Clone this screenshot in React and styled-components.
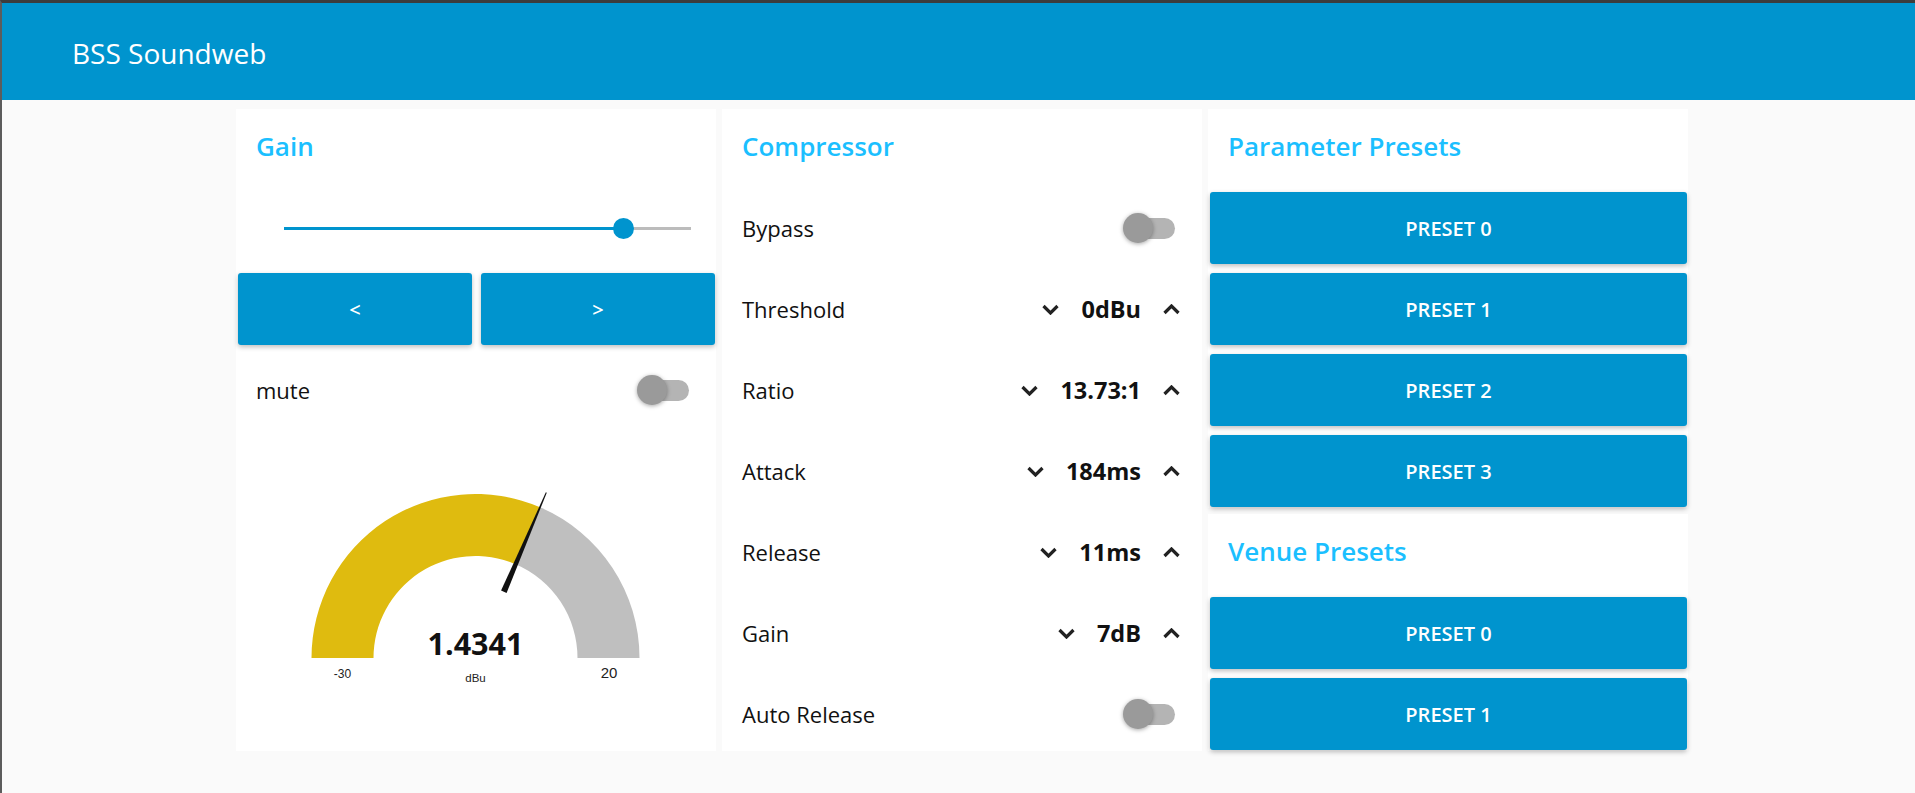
import React from 'react';
import styled, { createGlobalStyle } from 'styled-components';

const GlobalStyle = createGlobalStyle`
  html, body { margin: 0; padding: 0; background: #fafafa; }
  body { font-family: "Open Sans", "Noto Sans", sans-serif; }
  * { box-sizing: border-box; }
`;

const BLUE = '#0094ce';

const Page = styled.div`
  min-height: 100vh;
  border-top: 3px solid #3c3c3c;
  border-left: 2px solid #5c5c5c;
  background: #fafafa;
`;

const Header = styled.header`
  height: 97px;
  background: ${BLUE};
  display: flex;
  align-items: center;
  padding: 3px 0 0 70px;
`;

const AppTitle = styled.h1`
  margin: 0;
  font-size: 28px;
  font-weight: 400;
  color: #fff;
`;

const Main = styled.main`
  display: flex;
  align-items: flex-start;
  gap: 6px;
  padding: 9px 0 0 234px;
`;

const Column = styled.div`
  display: flex;
  flex-direction: column;
  gap: 6px;
  width: 480px;
`;

const Card = styled.section`
  background: #fff;
  width: 480px;
  display: flex;
  flex-direction: column;
  gap: 9px;
  padding: 0 1px 1px 2px;
`;

const CardTitle = styled.h2`
  margin: 0;
  height: 74px;
  line-height: 74px;
  padding-left: 18px;
  font-size: 26px;
  font-weight: 600;
  color: #1bbfff;
`;

const Row = styled.div`
  height: 72px;
  display: flex;
  align-items: center;
  justify-content: space-between;
  padding: 0 ${(p) => (p.$stepper ? '21px' : '26px')} 0 18px;
`;

const Label = styled.span`
  font-size: 22px;
  color: #111;
`;

const Stepper = styled.div`
  display: flex;
  align-items: center;
  gap: 22px;
`;

const Value = styled.span`
  font-size: 23.5px;
  font-weight: 700;
  color: #111;
`;

const ChevronSvg = styled.svg`
  display: block;
  width: 17px;
  height: 11px;
`;

const Chevron = ({ up }) => (
  <ChevronSvg viewBox="0 0 17 11">
    <polyline
      points={up ? '1.5,9 8.5,2 15.5,9' : '1.5,2 8.5,9 15.5,2'}
      fill="none"
      stroke="#222"
      strokeWidth="3.2"
    />
  </ChevronSvg>
);

const ToggleBox = styled.div`
  position: relative;
  width: 52px;
  height: 30px;
  display: flex;
  align-items: center;
  justify-content: flex-end;
`;

const ToggleTrack = styled.div`
  width: 51px;
  height: 21px;
  border-radius: 10.5px;
  background: #b4b4b4;
`;

const ToggleThumb = styled.div`
  position: absolute;
  left: 0;
  top: 0;
  width: 30px;
  height: 30px;
  border-radius: 50%;
  background: #9a9a9a;
  box-shadow: 0 1px 4px rgba(0, 0, 0, 0.35);
`;

const Toggle = () => (
  <ToggleBox>
    <ToggleTrack />
    <ToggleThumb />
  </ToggleBox>
);

const SliderRow = styled.div`
  height: 72px;
  display: flex;
  align-items: center;
  padding: 0 24px 0 46px;
`;

const SliderTrack = styled.div`
  position: relative;
  flex: 1;
  height: 3px;
  background: #bcbcbc;
`;

const SliderFill = styled.div`
  position: absolute;
  left: 0;
  top: 0;
  height: 100%;
  background: ${BLUE};
`;

const SliderThumb = styled.div`
  position: absolute;
  top: 50%;
  width: 21px;
  height: 21px;
  margin: -10.5px 0 0 -10.5px;
  border-radius: 50%;
  background: ${BLUE};
`;

const Slider = ({ value }) => (
  <SliderRow>
    <SliderTrack>
      <SliderFill style={{ width: `${value * 100}%` }} />
      <SliderThumb style={{ left: `${value * 100}%` }} />
    </SliderTrack>
  </SliderRow>
);

const ButtonPair = styled.div`
  display: grid;
  grid-template-columns: 1fr 1fr;
  gap: 9px;
`;

const Button = styled.button`
  height: 72px;
  width: 100%;
  border: none;
  border-radius: 3px;
  background: ${BLUE};
  color: #fff;
  font-family: "Open Sans", "Noto Sans", sans-serif;
  font-size: 20px;
  font-weight: 600;
  box-shadow: 0 2px 5px rgba(0, 0, 0, 0.26);
  cursor: pointer;
  padding: 0;
`;

const GaugeSvg = styled.svg`
  display: block;
  width: 477px;
  height: 315px;
`;

const Gauge = ({ value, min, max, unit }) => {
  const cx = 237.5;
  const cy = 223;
  const R = 164;
  const r = 102;
  const f = (value - min) / (max - min);
  const a = f * Math.PI;
  const ux = -Math.cos(a);
  const uy = -Math.sin(a);
  const ox = cx + R * ux;
  const oy = cy + R * uy;
  const ix = cx + r * ux;
  const iy = cy + r * uy;
  const gold = `M ${cx - R} ${cy} A ${R} ${R} 0 0 1 ${ox} ${oy} L ${ix} ${iy} A ${r} ${r} 0 0 0 ${cx - r} ${cy} Z`;
  const gray = `M ${ox} ${oy} A ${R} ${R} 0 0 1 ${cx + R} ${cy} L ${cx + r} ${cy} A ${r} ${r} 0 0 0 ${ix} ${iy} Z`;
  const nx = -uy;
  const ny = ux;
  const b0 = 72;
  const b1 = 180;
  const needle = [
    [cx + b0 * ux + 3 * nx, cy + b0 * uy + 3 * ny],
    [cx + b1 * ux + 0.5 * nx, cy + b1 * uy + 0.5 * ny],
    [cx + b1 * ux - 0.5 * nx, cy + b1 * uy - 0.5 * ny],
    [cx + b0 * ux - 3 * nx, cy + b0 * uy - 3 * ny],
  ]
    .map((p) => p.join(','))
    .join(' ');
  return (
    <GaugeSvg viewBox="0 0 477 315">
      <path d={gold} fill="#dfbb0f" />
      <path d={gray} fill="#bfbfbf" />
      <polygon points={needle} fill="#111" />
      <text x={cx} y="220" textAnchor="middle" fontFamily="Open Sans, Noto Sans, sans-serif" fontWeight="700" fontSize="30.5" fill="#111">
        {value}
      </text>
      <text x="104.5" y="243" textAnchor="middle" fontFamily="Liberation Sans, Arial, sans-serif" fontSize="12" fill="#222">
        {min}
      </text>
      <text x="371" y="243" textAnchor="middle" fontFamily="Liberation Sans, Arial, sans-serif" fontSize="15" fill="#222">
        {max}
      </text>
      <text x={cx} y="247" textAnchor="middle" fontFamily="Liberation Sans, Arial, sans-serif" fontSize="11.5" fill="#222">
        {unit}
      </text>
    </GaugeSvg>
  );
};

const compressorParams = [
  { label: 'Threshold', value: '0dBu' },
  { label: 'Ratio', value: '13.73:1' },
  { label: 'Attack', value: '184ms' },
  { label: 'Release', value: '11ms' },
  { label: 'Gain', value: '7dB' },
];

export default function App() {
  return (
    <>
      <GlobalStyle />
      <Page>
        <Header>
          <AppTitle>BSS Soundweb</AppTitle>
        </Header>
        <Main>
          <Column>
            <Card>
              <CardTitle>Gain</CardTitle>
              <Slider value={0.835} />
              <ButtonPair>
                <Button>&lt;</Button>
                <Button>&gt;</Button>
              </ButtonPair>
              <Row>
                <Label>mute</Label>
                <Toggle />
              </Row>
              <Gauge value={1.4341} min={-30} max={20} unit="dBu" />
            </Card>
          </Column>
          <Column>
            <Card>
              <CardTitle>Compressor</CardTitle>
              <Row>
                <Label>Bypass</Label>
                <Toggle />
              </Row>
              {compressorParams.map((p) => (
                <Row key={p.label} $stepper>
                  <Label>{p.label}</Label>
                  <Stepper>
                    <Chevron />
                    <Value>{p.value}</Value>
                    <Chevron up />
                  </Stepper>
                </Row>
              ))}
              <Row>
                <Label>Auto Release</Label>
                <Toggle />
              </Row>
            </Card>
          </Column>
          <Column>
            <Card>
              <CardTitle>Parameter Presets</CardTitle>
              {[0, 1, 2, 3].map((i) => (
                <Button key={i}>PRESET {i}</Button>
              ))}
            </Card>
            <Card>
              <CardTitle>Venue Presets</CardTitle>
              {[0, 1].map((i) => (
                <Button key={i}>PRESET {i}</Button>
              ))}
            </Card>
          </Column>
        </Main>
      </Page>
    </>
  );
}
